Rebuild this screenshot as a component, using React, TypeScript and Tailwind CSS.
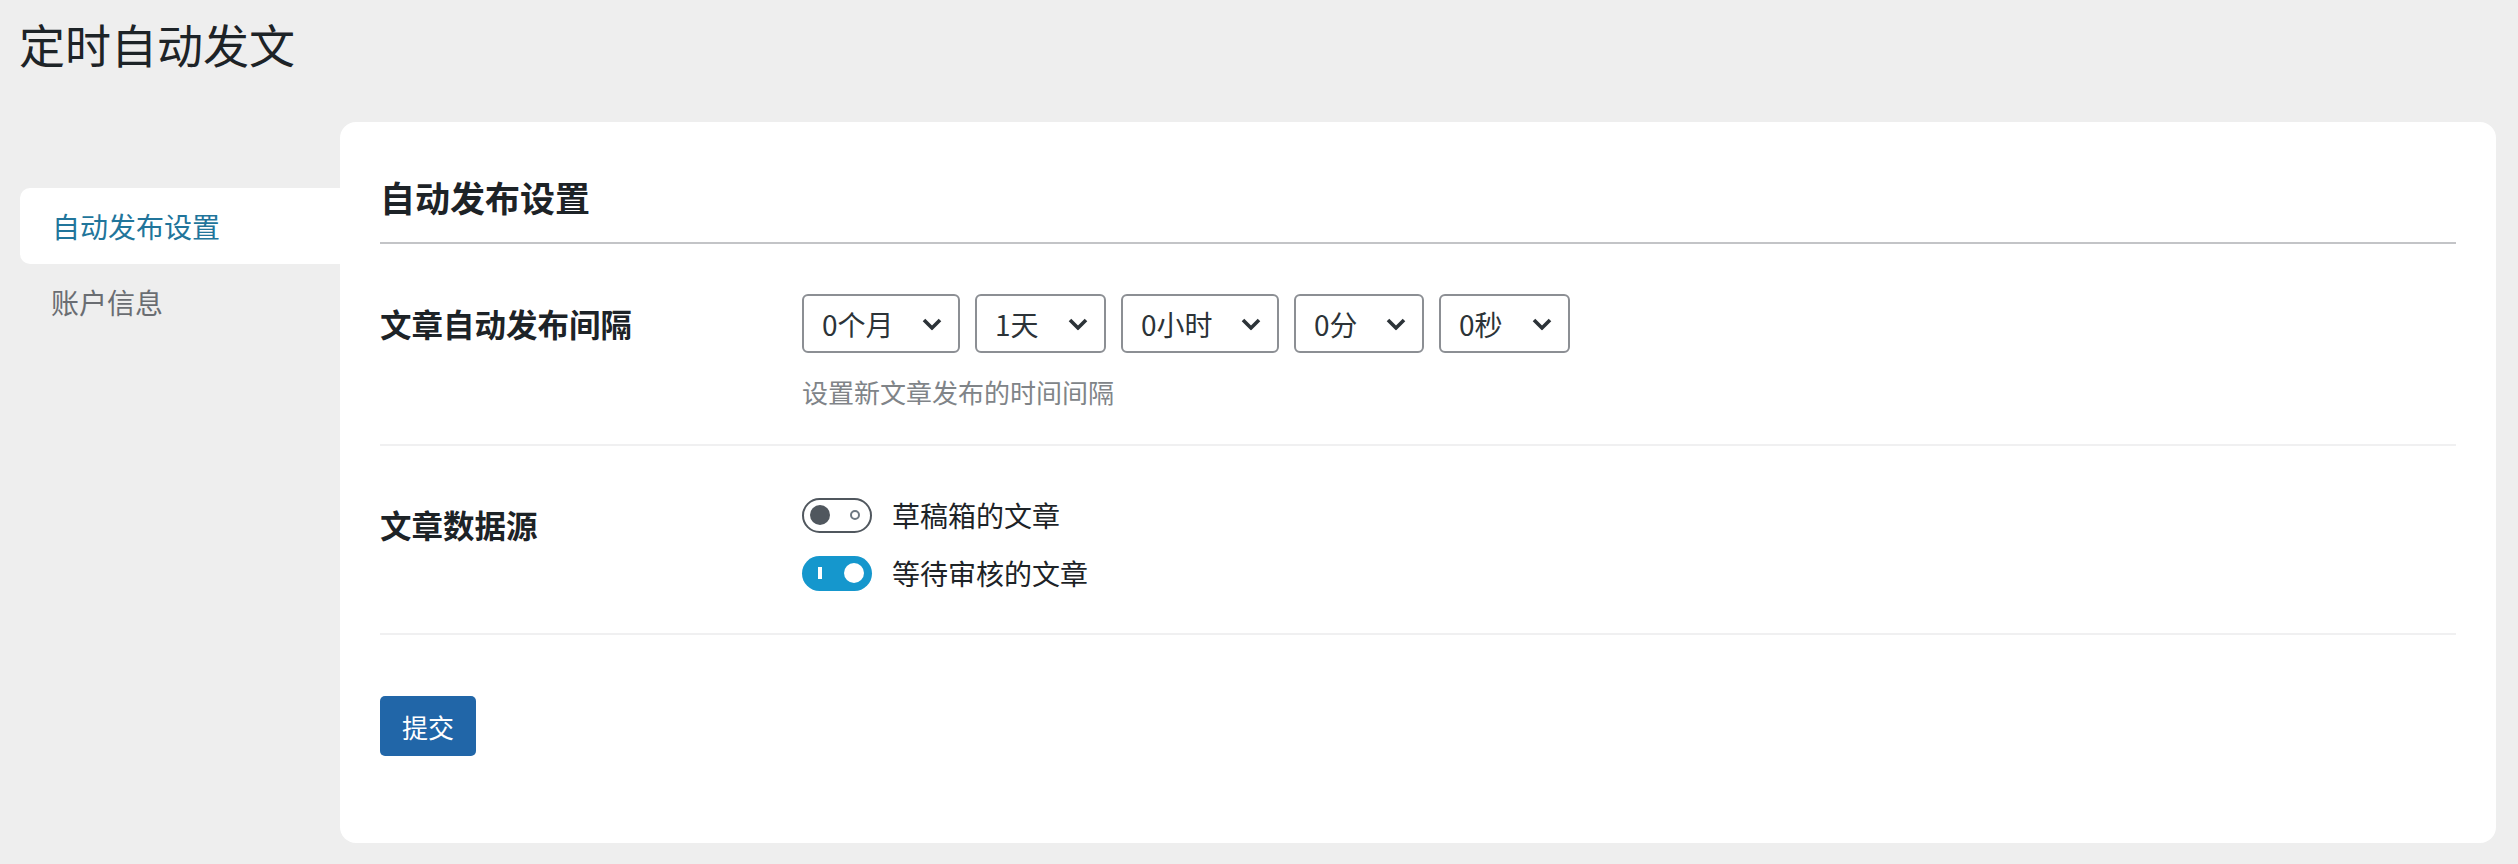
import { useState } from "react";

const selects = [
  { value: "0个月", width: "w-[158px]" },
  { value: "1天", width: "w-[131px]" },
  { value: "0小时", width: "w-[158px]" },
  { value: "0分", width: "w-[130px]" },
  { value: "0秒", width: "w-[131px]" },
];

function Chevron() {
  return (
    <svg
      width="20"
      height="13"
      viewBox="0 0 20 13"
      className="pointer-events-none absolute right-[18px] top-1/2 -translate-y-1/2"
    >
      <polyline
        points="2,2.5 10,10.5 18,2.5"
        fill="none"
        stroke="#2c3338"
        strokeWidth="3.6"
      />
    </svg>
  );
}

function Toggle({ on }: { on: boolean }) {
  if (on) {
    return (
      <span className="flex h-[35px] w-[70px] shrink-0 items-center justify-between rounded-full bg-[#1597cd] pl-[16px] pr-[8px]">
        <span className="h-[12px] w-[4px] bg-white" />
        <span className="h-[20px] w-[20px] rounded-full bg-white" />
      </span>
    );
  }
  return (
    <span className="flex h-[35px] w-[70px] shrink-0 items-center justify-between rounded-full border-2 border-[#50575e] bg-white pl-[6px] pr-[10px]">
      <span className="h-[20px] w-[20px] rounded-full bg-[#50575e]" />
      <span className="h-[10px] w-[10px] rounded-full border-2 border-[#6c7781]" />
    </span>
  );
}

export default function App() {
  const [tab, setTab] = useState("auto");

  return (
    <div
      className="min-h-[864px] w-full bg-[#eeeeee] pt-[13px] text-[#1d2327]"
      style={{ fontFamily: "'Noto Sans CJK SC', 'Noto Sans', sans-serif" }}
    >
      <h1 className="pl-[19px] text-[46px] font-normal leading-[60px]">定时自动发文</h1>

      <div className="mt-[49px] flex">
        <div className="ml-[20px] w-[320px] shrink-0 pt-[66px]">
          <button
            onClick={() => setTab("auto")}
            className={
              tab === "auto"
                ? "flex h-[76px] w-full items-center rounded-l-[10px] bg-white pl-[32px] text-left text-[28px] text-[#21759b]"
                : "flex h-[76px] w-full items-center pl-[32px] text-left text-[28px] text-[#6a6d72]"
            }
          >
            自动发布设置
          </button>
          <button
            onClick={() => setTab("account")}
            className={
              tab === "account"
                ? "flex h-[76px] w-full items-center rounded-l-[10px] bg-white pl-[31px] text-left text-[28px] text-[#21759b]"
                : "flex h-[76px] w-full items-center pl-[31px] text-left text-[28px] text-[#6a6d72]"
            }
          >
            账户信息
          </button>
        </div>

        <div className="mr-[22px] flex-1 rounded-[16px] bg-white px-[40px] pb-[87px] pt-[49px]">
          <h2 className="border-b-2 border-[#c3c4c7] pb-[19px] text-[35px] font-bold leading-[52px]">
            自动发布设置
          </h2>

          <div className="flex border-b-2 border-[#f0f0f1]">
            <div className="w-[422px] shrink-0 pt-[55px] text-[31.5px] font-bold leading-[48px]">
              文章自动发布间隔
            </div>
            <div className="pb-[32px] pt-[50px]">
              <div className="flex gap-[15px]">
                {selects.map((s) => (
                  <div key={s.value} className={`relative ${s.width}`}>
                    <select
                      defaultValue={s.value}
                      className="h-[59px] w-full appearance-none rounded-[6px] border-2 border-[#8c8f94] bg-white pl-[18px] text-[28px] text-[#2c3338]"
                    >
                      <option>{s.value}</option>
                    </select>
                    <Chevron />
                  </div>
                ))}
              </div>
              <p className="mt-[19px] text-[26px] leading-[40px] text-[#808488]">
                设置新文章发布的时间间隔
              </p>
            </div>
          </div>

          <div className="flex border-b-2 border-[#f0f0f1]">
            <div className="w-[422px] shrink-0 pt-[54px] text-[31.5px] font-bold leading-[48px]">
              文章数据源
            </div>
            <div className="flex flex-col gap-[14px] pb-[38px] pt-[47px]">
              <label className="flex h-[44px] items-center gap-[20px] text-[28px]">
                <Toggle on={false} />
                草稿箱的文章
              </label>
              <label className="flex h-[44px] items-center gap-[20px] text-[28px]">
                <Toggle on={true} />
                等待审核的文章
              </label>
            </div>
          </div>

          <button className="mt-[61px] h-[60px] w-[96px] rounded-[5px] bg-[#2166a8] text-[26px] text-white">
            提交
          </button>
        </div>
      </div>
    </div>
  );
}
